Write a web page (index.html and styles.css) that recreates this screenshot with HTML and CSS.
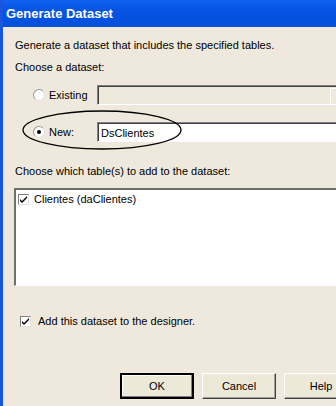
FILE: index.html
```
<!DOCTYPE html>
<html lang="en">
<head>
    <meta charset="UTF-8" />
    <title>Generate Dataset</title>
    <link rel="stylesheet" href="styles.css">
</head>
<body>
    <div class="ventana">
        <div class="titulo">Generate Dataset</div>

        <div class="cuerpo">
            <p class="intro">Generate a dataset that includes the specified tables.</p>
            <p class="etiqueta">Choose a dataset:</p>

            <!-- Opciones existente / nuevo -->
            <div class="opcion opcion-existente">
                <span class="radio"></span>
                <span class="opcion-texto">Existing</span>
                <div class="combo">
                    <span class="combo-boton"></span>
                </div>
            </div>
            <div class="opcion opcion-nuevo">
                <span class="radio marcado"></span>
                <span class="opcion-texto">New:</span>
                <div class="caja">DsClientes</div>
            </div>

            <p class="etiqueta etiqueta-tablas">Choose which table(s) to add to the dataset:</p>
            <div class="lista">
                <div class="lista-item">
                    <span class="check">
                        <svg width="9" height="9" viewBox="0 0 9 9"><path d="M1 4 L3 6 L8 1 L8 3 L3 8 L1 6 Z" fill="#000"/></svg>
                    </span>
                    <span>Clientes (daClientes)</span>
                </div>
            </div>

            <div class="agregar">
                <span class="check">
                    <svg width="9" height="9" viewBox="0 0 9 9"><path d="M1 4 L3 6 L8 1 L8 3 L3 8 L1 6 Z" fill="#000"/></svg>
                </span>
                <span>Add this dataset to the designer.</span>
            </div>

            <div class="botones">
                <button class="boton boton-defecto">OK</button>
                <button class="boton">Cancel</button>
                <button class="boton">Help</button>
            </div>
        </div>

        <!-- Marca dibujada sobre la opcion New -->
        <svg class="elipse" width="162" height="42" viewBox="0 0 162 42">
            <ellipse cx="81" cy="21" rx="79" ry="19" fill="none" stroke="#000" stroke-width="1.3"/>
        </svg>
    </div>
</body>
</html>
```
FILE: styles.css
```
* {
    margin: 0;
    padding: 0;
    box-sizing: border-box;
}

body {
    font-family: 'Liberation Sans', Arial, sans-serif;
    font-size: 11px;
    color: #000;
    background: #ece9d8;
}

.ventana {
    position: relative;
    width: 336px;
    height: 406px;
    overflow: hidden;
    background: #eee9dc;
    border-left: 3px solid #1a55e0;
}

.titulo {
    height: 27px;
    margin-left: -3px;
    padding: 6px 0 0 6px;
    background: linear-gradient(#0f63ee, #0554e2 40%, #0350dc);
    color: #fff;
    font-weight: bold;
    font-size: 13px;
}

.cuerpo {
    padding: 12px 0 0 12px;
}

.intro {
    line-height: 13px;
}

.etiqueta {
    margin-top: 9px;
    line-height: 13px;
}

.opcion {
    display: flex;
    align-items: center;
    height: 20px;
    padding-left: 18px;
}

.opcion > * {
    flex: none;
}

.opcion-existente {
    margin-top: 11px;
}

.opcion-nuevo {
    margin-top: 17px;
}

.radio {
    width: 12px;
    height: 12px;
    border-radius: 50%;
    background: #fff;
    border: 1px solid #9a9a9a;
    border-right-color: #e4e2da;
    border-bottom-color: #e4e2da;
    display: flex;
    align-items: center;
    justify-content: center;
}

.radio.marcado::after {
    content: "";
    width: 4px;
    height: 4px;
    border-radius: 50%;
    background: #000;
}

.opcion-texto {
    width: 52px;
    padding-left: 4px;
}

.combo {
    width: 250px;
    height: 20px;
    border: 1px solid #808080;
    border-right-color: #fff;
    border-bottom-color: #fff;
    box-shadow: inset 1px 1px 0 #404040;
    padding-left: 232px;
    padding-top: 2px;
}

.combo-boton {
    display: block;
    width: 16px;
    height: 15px;
    border-left: 1px solid #fff;
    border-top: 1px solid #fff;
}

.caja {
    width: 250px;
    height: 20px;
    background: #fff;
    border: 1px solid #808080;
    border-right-color: #fff;
    border-bottom-color: #fff;
    box-shadow: inset 1px 1px 0 #404040;
    padding: 4px 0 0 3px;
}

.etiqueta-tablas {
    margin-top: 23px;
}

.lista {
    margin: 10px 0 0 -1px;
    width: 340px;
    height: 98px;
    background: #fff;
    border-top: 2px solid #6e6e6e;
    border-left: 2px solid #6e6e6e;
    border-bottom: 1px solid #fff;
    padding: 3px 0 0 2px;
}

.lista-item,
.agregar {
    display: flex;
    align-items: center;
    gap: 5px;
}

.check {
    width: 11px;
    height: 11px;
    background: #fff;
    border: 1px solid #808080;
    border-right-color: #e4e2da;
    border-bottom-color: #e4e2da;
    display: flex;
    align-items: center;
    justify-content: center;
}

.agregar {
    margin: 29px 0 0 5px;
    gap: 7px;
}

.botones {
    display: flex;
    gap: 8px;
    margin: 46px 0 0 105px;
}

.boton {
    flex: none;
    width: 74px;
    height: 26px;
    font-family: 'Liberation Sans', Arial, sans-serif;
    font-size: 11px;
    background: #ece9d8;
    border: 1px solid #fff;
    border-right-color: #404040;
    border-bottom-color: #404040;
    box-shadow: inset -1px -1px 0 #a0a0a0;
}

.boton-defecto {
    border: 2px solid #000;
    box-shadow: inset -1px -1px 0 #808080, inset 1px 1px 0 #fff;
}

.elipse {
    position: absolute;
    left: 18px;
    top: 109px;
}
```
